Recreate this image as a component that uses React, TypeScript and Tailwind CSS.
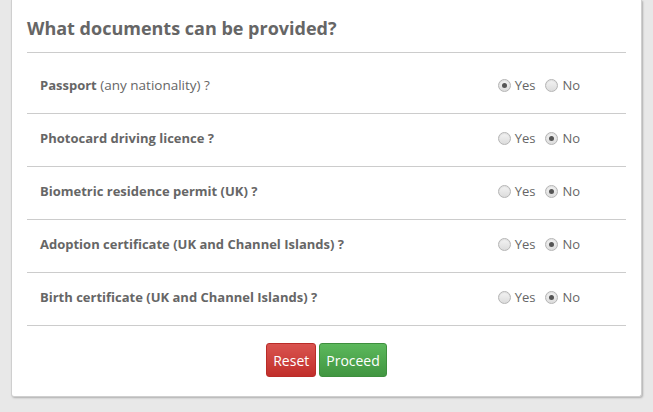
import React, { useState } from "react";

const docs = [
  { bold: "Passport", rest: " (any nationality) ?", value: "yes" },
  { bold: "Photocard driving licence ?", rest: "", value: "no" },
  { bold: "Biometric residence permit (UK) ?", rest: "", value: "no" },
  { bold: "Adoption certificate (UK and Channel Islands) ?", rest: "", value: "no" },
  { bold: "Birth certificate (UK and Channel Islands) ?", rest: "", value: "no" },
];

function Radio({ checked, label, onClick }: { checked: boolean; label: string; onClick: () => void }) {
  return (
    <label className="flex items-center cursor-pointer" onClick={onClick}>
      <span className="w-[13px] h-[13px] rounded-full border border-[#b5b5b5] bg-gradient-to-b from-[#f4f4f4] to-[#dcdcdc] flex items-center justify-center shadow-[inset_0_1px_1px_rgba(0,0,0,0.08)]">
        {checked && <span className="w-[5px] h-[5px] rounded-full bg-[#555]" />}
      </span>
      <span className="ml-[4px] text-[13px] text-[#666]">{label}</span>
    </label>
  );
}

export default function App() {
  const [answers, setAnswers] = useState(docs.map((d) => d.value));

  const set = (i: number, v: string) => {
    const next = [...answers];
    next[i] = v;
    setAnswers(next);
  };

  return (
    <div className="min-h-[412px] bg-[#e8e8e8] px-[11px] pb-[14px] font-['Open_Sans',sans-serif]">
      <div className="bg-white border border-t-0 border-[#cfcfcf] rounded-b-[3px] shadow-[1px_1px_2px_rgba(0,0,0,0.25)] px-[15px] pb-[19px]">
        <h2 className="text-[18px] font-bold text-[#666] pt-[17px] pb-[12px] leading-[23px] border-b border-[#cccccc]">
          What documents can be provided?
        </h2>
        <div className="mt-[8px]">
          {docs.map((d, i) => (
            <div key={i} className="h-[53px] flex items-center border-b border-[#cccccc] pl-[13px] pr-[46px] pb-[3px]">
              <div className="flex-1 text-[13px] text-[#666]">
                <span className="font-bold">{d.bold}</span>
                {d.rest && <span className="text-[13.5px]">{d.rest}</span>}
              </div>
              <div className="flex items-center gap-[10px]">
                <Radio checked={answers[i] === "yes"} label="Yes" onClick={() => set(i, "yes")} />
                <Radio checked={answers[i] === "no"} label="No" onClick={() => set(i, "no")} />
              </div>
            </div>
          ))}
        </div>
        <div className="flex justify-center gap-[3px] mt-[17px]">
          <button className="h-[34px] px-[6px] text-[14px] text-white rounded-[3px] border border-[#b92c28] bg-gradient-to-b from-[#d9534f] to-[#c12e2a]">
            Reset
          </button>
          <button className="h-[34px] px-[6px] text-[14px] text-white rounded-[3px] border border-[#3e8f3e] bg-gradient-to-b from-[#5cb85c] to-[#419641]">
            Proceed
          </button>
        </div>
      </div>
    </div>
  );
}
